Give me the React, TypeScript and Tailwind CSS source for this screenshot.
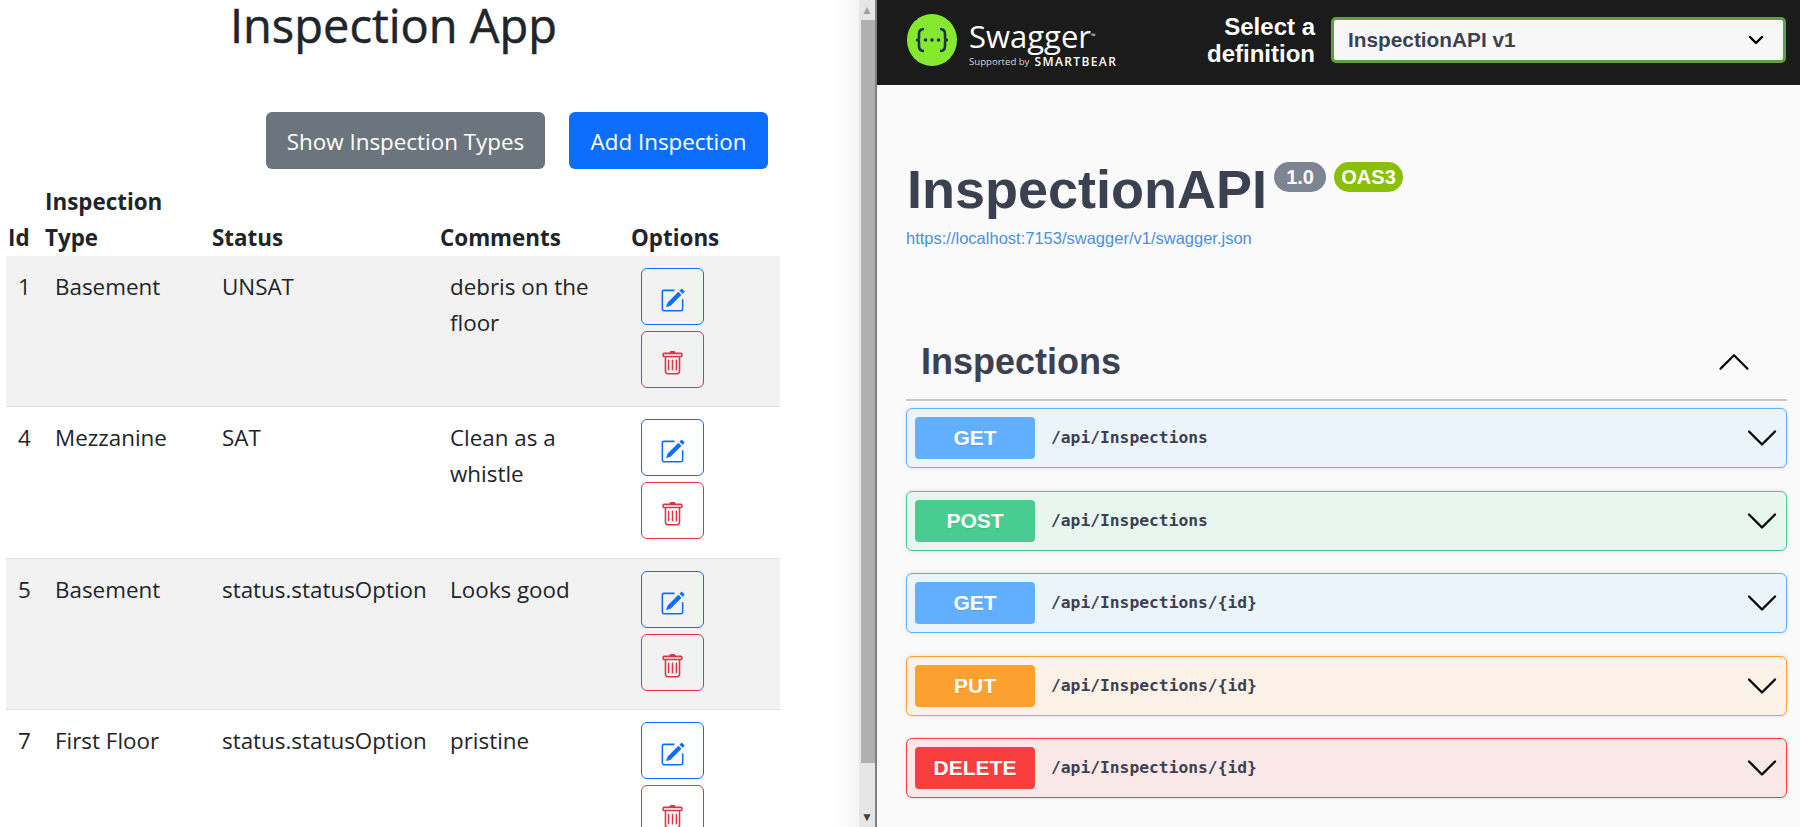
import React from 'react';
import { ChevronDown, ChevronUp } from 'lucide-react';

const rows = [
  { id: 1, type: 'Basement', status: 'UNSAT', comments: 'debris on the floor' },
  { id: 4, type: 'Mezzanine', status: 'SAT', comments: 'Clean as a whistle' },
  { id: 5, type: 'Basement', status: 'status.statusOption', comments: 'Looks good' },
  { id: 7, type: 'First Floor', status: 'status.statusOption', comments: 'pristine' },
];

const ops = [
  { method: 'GET', path: '/api/Inspections', box: 'bg-[#ebf3fb] border-[#61affe]', badge: 'bg-[#61affe]' },
  { method: 'POST', path: '/api/Inspections', box: 'bg-[#e8f6f0] border-[#49cc90]', badge: 'bg-[#49cc90]' },
  { method: 'GET', path: '/api/Inspections/{id}', box: 'bg-[#ebf3fb] border-[#61affe]', badge: 'bg-[#61affe]' },
  { method: 'PUT', path: '/api/Inspections/{id}', box: 'bg-[#fbf1e6] border-[#fca130]', badge: 'bg-[#fca130]' },
  { method: 'DELETE', path: '/api/Inspections/{id}', box: 'bg-[#fae7e7] border-[#f93e3e]', badge: 'bg-[#f93e3e]' },
];

const EditIcon = () => (
  <svg width="25" height="25" viewBox="0 0 16 16" fill="#0d6efd">
    <path d="M15.502 1.94a.5.5 0 0 1 0 .706L14.459 3.69l-2-2L13.502.646a.5.5 0 0 1 .707 0l1.293 1.293zm-1.75 2.456-2-2L4.939 9.21a.5.5 0 0 0-.121.196l-.805 2.414a.25.25 0 0 0 .316.316l2.414-.805a.5.5 0 0 0 .196-.12l6.813-6.814z" />
    <path fillRule="evenodd" d="M1 13.5A1.5 1.5 0 0 0 2.5 15h11a1.5 1.5 0 0 0 1.5-1.5v-6a.5.5 0 0 0-1 0v6a.5.5 0 0 1-.5.5h-11a.5.5 0 0 1-.5-.5v-11a.5.5 0 0 1 .5-.5H9a.5.5 0 0 0 0-1H2.5A1.5 1.5 0 0 0 1 2.5v11z" />
  </svg>
);

const TrashIcon = () => (
  <svg width="25" height="25" viewBox="0 0 16 16" fill="#dc3545">
    <path d="M5.5 5.5A.5.5 0 0 1 6 6v6a.5.5 0 0 1-1 0V6a.5.5 0 0 1 .5-.5zm2.5 0a.5.5 0 0 1 .5.5v6a.5.5 0 0 1-1 0V6a.5.5 0 0 1 .5-.5zm3 .5a.5.5 0 0 0-1 0v6a.5.5 0 0 0 1 0V6z" />
    <path fillRule="evenodd" d="M14.5 3a1 1 0 0 1-1 1H13v9a2 2 0 0 1-2 2H5a2 2 0 0 1-2-2V4h-.5a1 1 0 0 1-1-1V2a1 1 0 0 1 1-1H6a1 1 0 0 1 1-1h2a1 1 0 0 1 1 1h3.5a1 1 0 0 1 1 1v1zM4.118 4 4 4.059V13a1 1 0 0 0 1 1h6a1 1 0 0 0 1-1V4.059L11.882 4H4.118zM2.5 3V2h11v1h-11z" />
  </svg>
);

const SwaggerLogo = () => (
  <svg width="50" height="52" viewBox="0 0 50 52">
    <ellipse cx="25" cy="26" rx="25" ry="26" fill="#85ea2d" />
    <path d="M17 15c-4 0-5 2-5 5v4c0 2-1 2-3 2 2 0 3 0 3 2v4c0 3 1 5 5 5" fill="none" stroke="#173647" strokeWidth="2.6" />
    <path d="M33 15c4 0 5 2 5 5v4c0 2 1 2 3 2-2 0-3 0-3 2v4c0 3-1 5-5 5" fill="none" stroke="#173647" strokeWidth="2.6" />
    <circle cx="18.5" cy="26" r="1.8" fill="#173647" />
    <circle cx="25" cy="26" r="1.8" fill="#173647" />
    <circle cx="31.5" cy="26" r="1.8" fill="#173647" />
  </svg>
);

export default function App() {
  return (
    <div className="flex h-[827px] w-[1800px] overflow-hidden bg-white">
      {/* left frame: the inspection app */}
      <div className="w-[859px] shrink-0 overflow-hidden bg-[linear-gradient(90deg,#fff_97%,#f5f5f5_100%)] font-['Open_Sans',sans-serif] text-[#212529]">
        <h1 className="w-[787px] text-center text-[47px] leading-[50px] font-medium [-webkit-text-stroke:0.5px_#212529]">Inspection App</h1>
        <div className="mt-[62px] flex w-[768px] justify-end gap-6">
          <button className="h-[57px] w-[279px] rounded-[6px] bg-[#6c757d] pt-[3px] text-[22.4px] text-white">Show Inspection Types</button>
          <button className="h-[57px] w-[199px] rounded-[6px] bg-[#0d6efd] pt-[3px] text-[22.4px] text-white">Add Inspection</button>
        </div>
        <table className="mt-[15px] ml-[6px] w-[774px] table-fixed border-collapse text-[22.4px] leading-[36px]">
          <colgroup>
            <col className="w-[37px]" />
            <col className="w-[167px]" />
            <col className="w-[228px]" />
            <col className="w-[191px]" />
            <col className="w-[151px]" />
          </colgroup>
          <thead>
            <tr className="align-bottom font-bold">
              <th className="px-[2px] text-left font-bold">Id</th>
              <th className="px-[2px] text-left font-bold">Inspection Type</th>
              <th className="px-[2px] text-left font-bold">Status</th>
              <th className="px-[2px] text-left font-bold">Comments</th>
              <th className="px-[2px] text-left font-bold">Options</th>
            </tr>
          </thead>
          <tbody>
            {rows.map((r, i) => (
              <tr key={r.id} className={`border-b border-[#dee2e6] align-top ${i % 2 === 0 ? 'bg-[#f2f2f2]' : ''}`}>
                <td className="px-[12px] pt-[13px]">{r.id}</td>
                <td className="px-[12px] pt-[13px]">{r.type}</td>
                <td className="px-[12px] pt-[13px] whitespace-nowrap">{r.status}</td>
                <td className="px-[12px] pt-[13px]">{r.comments}</td>
                <td className={`px-[12px] pt-[12px] ${i === 1 ? 'pb-[19px]' : 'pb-[18px]'}`}>
                  <div className="flex flex-col gap-[6px]">
                    <button className="flex h-[57px] w-[63px] items-center justify-center rounded-[6px] border border-[#0d6efd] pt-[7px]"><EditIcon /></button>
                    <button className="flex h-[57px] w-[63px] items-center justify-center rounded-[6px] border border-[#dc3545] pt-[7px]"><TrashIcon /></button>
                  </div>
                </td>
              </tr>
            ))}
          </tbody>
        </table>
      </div>

      {/* scrollbar of the left frame */}
      <div className="flex w-[18px] shrink-0 flex-col border-r-2 border-[#808080] bg-[#e6e6e6]">
        <div className="flex h-[20px] items-center justify-center text-[12px] leading-none text-[#a0a0a0]">▲</div>
        <div className="ml-[2px] h-[743px] bg-[#b0b0b0]" />
        <div className="flex-1" />
        <div className="flex h-[20px] items-center justify-center text-[12px] leading-none text-[#404040]">▼</div>
      </div>

      {/* right frame: swagger ui */}
      <div className="min-w-0 flex-1 bg-[#fafafa] font-['Liberation_Sans',sans-serif] text-[#3b4151]">
        <div className="flex h-[85px] items-center bg-[#1b1b1b] pr-[14px] pb-[5px] pl-[30px]">
          <div className="flex items-center gap-[12px]">
            <div className="mb-[1px]"><SwaggerLogo /></div>
            <div className="mt-[5px] flex flex-col font-['Open_Sans',sans-serif] text-white">
              <div className="text-[31px] leading-[36px]">Swagger<span className="align-bottom text-[6px]">™</span></div>
              <div className="mt-[2px] flex items-center gap-[5px] text-[9.6px] leading-[12px] text-[#d5d5d5]">
                Supported by <span className="text-[12px] font-semibold tracking-[1.4px] text-white">SMARTBEAR</span>
              </div>
            </div>
          </div>
          <div className="ml-auto w-[120px] text-right text-[24px] leading-[27px] font-bold text-white">Select a definition</div>
          <div className="ml-[16px] flex h-[46px] w-[455px] items-center justify-between rounded-[5px] border-[3px] border-[#62a03f] bg-[#f7f7f7] pr-[15px] pl-[14px] text-[20.8px] font-bold">
            InspectionAPI v1
            <ChevronDown size={24} strokeWidth={2.4} className="text-black" />
          </div>
        </div>

        <div className="pt-[73px] pr-[13px] pl-[29px]">
          <div className="flex items-start pl-[1px]">
            <h2 className="text-[54px] leading-[62px] font-bold">InspectionAPI</h2>
            <span className="mt-[4px] ml-[7px] flex h-[30px] w-[52px] items-center justify-center rounded-full bg-[#7d8492] text-[20px] font-bold text-white">1.0</span>
            <span className="mt-[4px] ml-[8px] flex h-[30px] w-[69px] items-center justify-center rounded-full bg-[#89bf04] text-[20px] font-bold text-white">OAS3</span>
          </div>
          <div className="mt-[7px] text-[16.5px] leading-[22px] text-[#4990e2]">https://localhost:7153/swagger/v1/swagger.json</div>

          <div className="mt-[79px] flex h-[73px] items-center justify-between border-b-2 border-[#c6c8cd] pr-[26px] pb-[4px] pl-[15px] text-[36px] font-bold">
            Inspections
            <ChevronUp size={54} strokeWidth={1} className="text-black" />
          </div>

          <div className="mt-[7px] flex flex-col gap-[22.5px]">
            {ops.map((op, i) => (
              <div key={i} className={`flex h-[60px] items-center rounded-[6px] border-[1.5px] pl-[8px] shadow-[0_0_4px_rgba(0,0,0,0.12)] ${op.box}`}>
                <div className={`flex h-[42px] w-[120px] items-center justify-center rounded-[4px] text-[21px] font-bold text-white [text-shadow:0_1px_0_rgba(0,0,0,0.1)] ${op.badge}`}>{op.method}</div>
                <div className="mt-[1px] ml-[16px] font-['DejaVu_Sans_Mono',monospace] text-[16.3px] font-bold">{op.path}</div>
                <ChevronDown size={52} strokeWidth={1.05} className="mr-[-1.5px] ml-auto text-black" />
              </div>
            ))}
          </div>
        </div>
      </div>
    </div>
  );
}
